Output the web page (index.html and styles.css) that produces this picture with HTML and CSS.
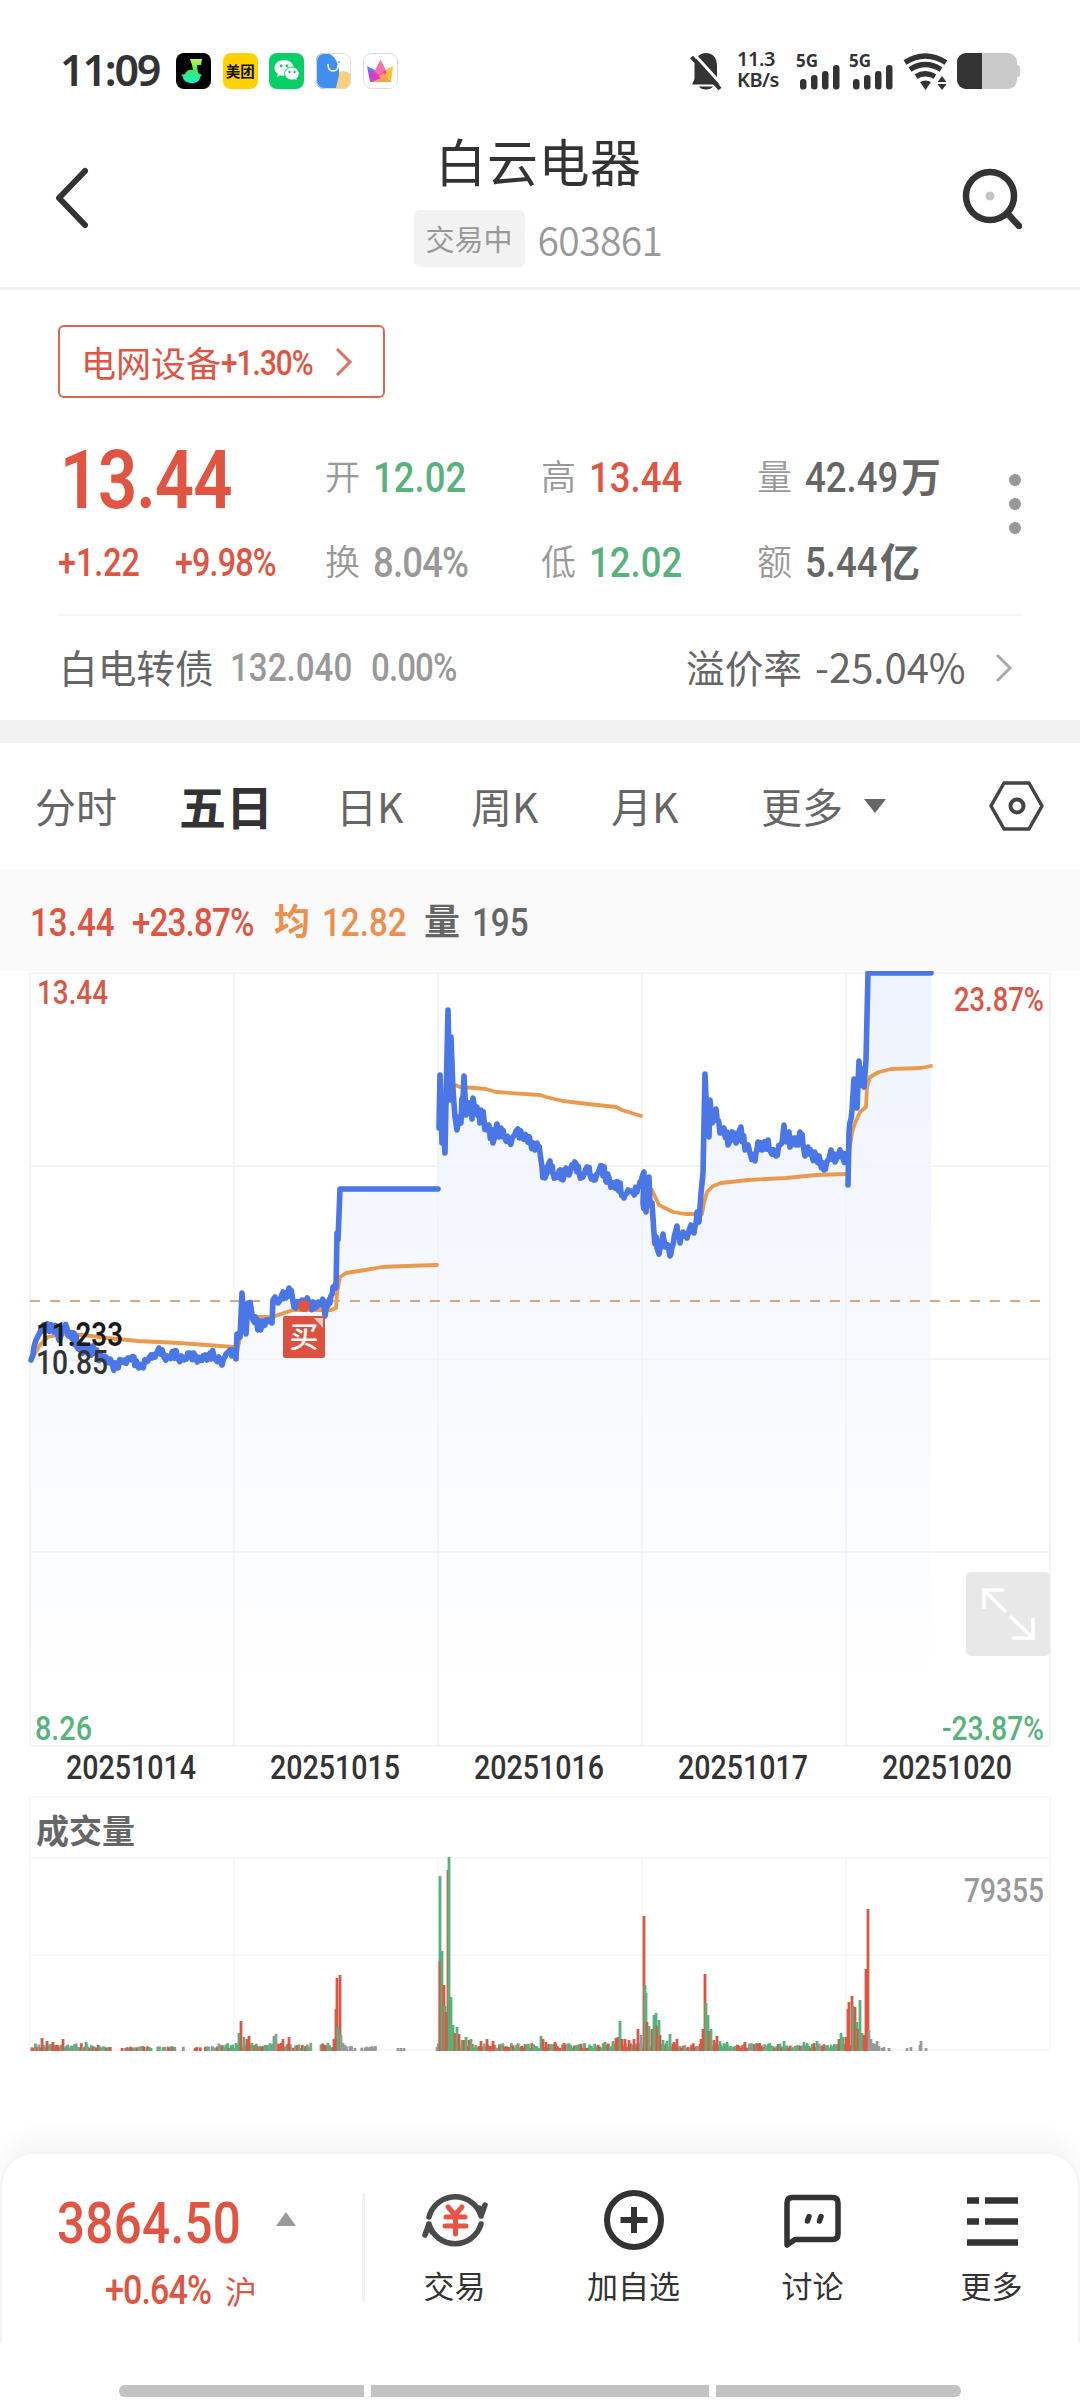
FILE: index.html
```html
<!DOCTYPE html>
<html lang="zh-CN">
<head>
    <meta charset="UTF-8">
    <meta name="viewport" content="width=device-width, initial-scale=1.0">
    <title>白云电器 603861</title>
    <link rel="stylesheet" href="styles.css">
</head>
<body>
    <div class="status">
        <span class="time">11:09</span>
        <ul class="apps">
            <li>
                <svg width="35" height="36" viewBox="0 0 35 36">
                    <defs><linearGradient id="note" x1="0" y1="0" x2="0" y2="1"><stop offset="0" stop-color="#c8f53c"/><stop offset=".5" stop-color="#3ee866"/><stop offset="1" stop-color="#12f0d0"/></linearGradient></defs>
                    <rect width="35" height="36" rx="8" fill="#000"/>
                    <path d="M14 6h12l-1 6h-4l1 8 4 2-2 2c0 4-4 6-8 6s-9-2-9-6l-2-2 4-1c1-3 4-5 8-4l-1-5z" fill="url(#note)"/>
                </svg>
            </li>
            <li><span class="meituan">美团</span></li>
            <li>
                <svg width="35" height="36" viewBox="0 0 35 36">
                    <rect width="35" height="36" rx="8" fill="#07cf68"/>
                    <path d="M15 7c-5.600 0-9.500 3.600-9.500 8 0 2.600 1.300 4.600 3.300 6l-.8 3 3.400-1.800c1.200.4 2.400.5 3.600.5 5.500 0 9.600-3.400 9.600-7.800S20.500 7 15 7z" fill="#fff"/>
                    <path d="M23 14c-4.300 0-7.400 3-7.400 6.600s3.100 6.500 7.400 6.500c1 0 2-.2 2.800-.5l2.500 1.400-.6-2.400c1.500-1.200 2.500-2.900 2.500-5 0-3.600-3-6.600-7.200-6.600z" fill="#fff" stroke="#07cf68"/>
                    <g fill="#07cf68"><circle cx="12" cy="13" r="1.400"/><circle cx="18" cy="13" r="1.400"/><circle cx="20.500" cy="19" r="1.200"/><circle cx="25.500" cy="19" r="1.200"/></g>
                </svg>
            </li>
            <li>
                <svg width="35" height="36" viewBox="0 0 35 36">
                    <clipPath id="tile"><rect width="35" height="36" rx="8"/></clipPath>
                    <g clip-path="url(#tile)">
                        <rect width="35" height="36" fill="#fff"/>
                        <circle cx="27" cy="28" r="10" fill="#f8d07d"/>
                        <path d="M0 0h10c7 1 10 6 12 12 3 9-1 16-2 24H0z" fill="#428eee"/>
                    </g>
                    <path d="M12 11c0 5 2 7 5 7s5-2 5-6" fill="none" stroke="#fff" stroke-width="1.500"/>
                    <circle cx="23" cy="9" r="1" fill="#79a7df"/>
                    <rect x=".5" y=".5" width="34" height="35" rx="8" fill="none" stroke="#ddd"/>
                </svg>
            </li>
            <li>
                <svg width="35" height="36" viewBox="0 0 35 36">
                    <rect x=".5" y=".5" width="34" height="35" rx="8" fill="#fff" stroke="#ddd"/>
                    <path d="M4 13l10 5-5 11H7z" fill="#5f83ee"/>
                    <path d="M30 13l-10 5 5 11h3z" fill="#fdc13c"/>
                    <path d="M17.500 7l6 12-6 10H8z" fill="#f745a5"/>
                    <path d="M17.500 7l5 10-6 5-5-4z" fill="#fa6fb0"/>
                    <path d="M8 29l12-9 8 9z" fill="#f6a350"/>
                    <path d="M5 16l13 9-10 4z" fill="#d53bd0"/>
                </svg>
            </li>
        </ul>
        <svg class="bell" width="34" height="38" viewBox="0 0 34 38">
            <path d="M3.500 31.500c0-3 1.500-3 2-6V13C6 5 10 0 17 0s11 5 11 13v12c.5 3 4 4 4 6.500z" fill="#333"/>
            <path d="M10 33.500h14c-2 4-12 4-14 0z" fill="#333"/>
            <path d="M5 1L34 33" stroke="#fff" stroke-width="3"/>
            <path d="M2.500 4L31 36" stroke="#333" stroke-width="4"/>
        </svg>
        <div class="speed"><b>11.3</b><b>KB/s</b></div>
        <div class="signal">
            <b>5G</b>
            <svg width="41" height="26" viewBox="0 0 41 26"><g fill="#333"><rect y="15" width="6.500" height="10.500" rx="3"/><rect x="11" y="11" width="6.500" height="14.500" rx="3"/><rect x="22" y="7" width="6.500" height="18.500" rx="3"/><rect x="33" y="1" width="6.500" height="24.500" rx="3"/></g></svg>
        </div>
        <div class="signal">
            <b>5G</b>
            <svg width="41" height="26" viewBox="0 0 41 26"><g fill="#333"><rect y="15" width="6.500" height="10.500" rx="3"/><rect x="11" y="11" width="6.500" height="14.500" rx="3"/><rect x="22" y="7" width="6.500" height="18.500" rx="3"/><rect x="33" y="1" width="6.500" height="24.500" rx="3"/></g></svg>
        </div>
        <svg class="wifi" width="46" height="38" viewBox="0 0 46 38">
            <g fill="none" stroke="#333" stroke-width="5.200">
                <path d="M2 9.500Q22 -3.500 43 9.500"/>
                <path d="M7 16.500Q22 6.500 38 16.500"/>
                <path d="M13 23.500Q22 18 32 23.500"/>
            </g>
            <path d="M17 29q5.500-3 11 0l-5.500 8z" fill="#333"/>
            <path d="M39 23l4.500 6h-9zM39 37l4.500-6h-9z" fill="#333"/>
        </svg>
        <svg class="battery" width="63" height="36" viewBox="0 0 63 36">
            <rect x="52" y="12" width="11" height="12" rx="3" fill="#cacaca"/>
            <rect width="60" height="36" rx="9" fill="#cacaca"/>
            <path d="M25 0H9a9 9 0 0 0-9 9v18a9 9 0 0 0 9 9h16z" fill="#333"/>
        </svg>
    </div>

    <div class="header">
        <svg class="back" width="34" height="62" viewBox="0 0 34 62"><path d="M30 4L4 31l26 27" fill="none" stroke="#333" stroke-width="6" stroke-linecap="round" stroke-linejoin="round"/></svg>
        <div class="name">
            <h1>白云电器</h1>
            <p><span class="state">交易中</span><span class="code">603861</span></p>
        </div>
        <svg class="search" width="60" height="62" viewBox="0 0 60 62">
            <circle cx="28" cy="29" r="24" fill="none" stroke="#333" stroke-width="6.500"/>
            <path d="M45 46l12 13" stroke="#333" stroke-width="6.500" stroke-linecap="round"/>
            <circle cx="28" cy="29" r="4.500" fill="#c4c4c4"/>
        </svg>
    </div>

    <div class="quote">
        <div class="sector">电网设备<span class="num">+1.30%</span>
            <svg width="18" height="30" viewBox="0 0 18 30"><path d="M2 2l13 13L2 28" fill="none" stroke="#e0705f" stroke-width="3"/></svg>
        </div>
        <div class="prices">
            <div class="now">
                <span class="num last">13.44</span>
                <div class="change"><span class="num">+1.22</span><span class="num tight">+9.98%</span></div>
            </div>
            <ul class="stats">
                <li><i>开</i><span class="num green">12.02</span></li>
                <li><i>高</i><span class="num red">13.44</span></li>
                <li><i>量</i><span class="num dark">42.49</span><b>万</b></li>
                <li><i>换</i><span class="num gray tight">8.04%</span></li>
                <li><i>低</i><span class="num green">12.02</span></li>
                <li><i>额</i><span class="num dark short">5.44</span><b>亿</b></li>
            </ul>
            <div class="dots"><span></span><span></span><span></span></div>
        </div>
        <div class="bond">
            <span class="bondName">白电转债</span>
            <span class="num bondPrice">132.040</span>
            <span class="num bondRate tight">0.00%</span>
            <span class="premium">溢价率<em>-25.04%</em></span>
            <svg width="18" height="30" viewBox="0 0 18 30"><path d="M2 2l13 13L2 28" fill="none" stroke="#aaa" stroke-width="3"/></svg>
        </div>
    </div>

    <ul class="tabs">
        <li>分时</li>
        <li class="on">五日</li>
        <li>日K</li>
        <li>周K</li>
        <li>月K</li>
        <li>更多</li>
        <li class="arrow"></li>
        <li class="setting">
            <svg width="58" height="52" viewBox="0 0 58 52"><path d="M16 3h25l13 23-13 23H16L3 26z" fill="none" stroke="#444" stroke-width="3.500" stroke-linejoin="round"/><circle cx="29" cy="26" r="6.500" fill="none" stroke="#444" stroke-width="4"/></svg>
        </li>
    </ul>

    <div class="info">
        <span class="num red">13.44</span>
        <span class="num red pct tight">+23.87%</span>
        <b class="orange">均</b>
        <span class="num orange avg">12.82</span>
        <b>量</b>
        <span class="num">195</span>
    </div>

    <!-- price chart, date row and volume chart share one coordinate system -->
    <svg class="chart" width="1080" height="1089" viewBox="0 971 1080 1089">
        <defs>
            <linearGradient id="fill" gradientUnits="userSpaceOnUse" x1="0" y1="973" x2="0" y2="1700">
                <stop offset="0" stop-color="#4a78e8" stop-opacity=".09"/>
                <stop offset="1" stop-color="#4a78e8" stop-opacity="0"/>
            </linearGradient>
        </defs>
        <path id="area" fill="url(#fill)"/>
        <path class="grid" d="M30 973H1050M30 1166H1050M30 1359H1050M30 1552H1050M30 1746H1050M30 973V1746M234 973V1746M438 973V1746M642 973V1746M846 973V1746M1050 973V1746"/>
        <path class="grid thin" d="M30 1797H1050V2050H30zM30 1858H1050M30 1955H1050M234 1858V2050M438 1858V2050M642 1858V2050M846 1858V2050"/>
        <g id="avg" class="avgLine"></g>
        <path class="dash" d="M30 1301H1050"/>
        <g id="price" class="priceLine"></g>
        <circle cx="304" cy="1306" r="6" fill="#e05442"/>
        <rect x="283" y="1316" width="42" height="42" rx="2" fill="#dc5140"/>
        <path d="M314 1318h9v10z" fill="#f6cdc7"/>
        <text class="buy" x="304" y="1348" text-anchor="middle">买</text>
        <g class="label">
            <text x="37" y="1004" textLength="71" lengthAdjust="spacingAndGlyphs" class="fRed">13.44</text>
            <text x="35" y="1740" textLength="57" lengthAdjust="spacingAndGlyphs" class="fGreen">8.26</text>
            <text x="954" y="1011" textLength="90" lengthAdjust="spacingAndGlyphs" class="fRed">23.87%</text>
            <text x="942" y="1740" textLength="102" lengthAdjust="spacingAndGlyphs" class="fGreen">-23.87%</text>
            <text x="36" y="1346" textLength="87" lengthAdjust="spacingAndGlyphs" class="cost">11.233</text>
            <text x="36" y="1374" textLength="72" lengthAdjust="spacingAndGlyphs">10.85</text>
            <text x="66" y="1779" textLength="130" lengthAdjust="spacingAndGlyphs">20251014</text>
            <text x="270" y="1779" textLength="130" lengthAdjust="spacingAndGlyphs">20251015</text>
            <text x="474" y="1779" textLength="130" lengthAdjust="spacingAndGlyphs">20251016</text>
            <text x="678" y="1779" textLength="130" lengthAdjust="spacingAndGlyphs">20251017</text>
            <text x="882" y="1779" textLength="130" lengthAdjust="spacingAndGlyphs">20251020</text>
            <text x="964" y="1902" textLength="80" lengthAdjust="spacingAndGlyphs" class="fGray">79355</text>
        </g>
        <text class="volTitle" x="36" y="1843">成交量</text>
        <rect x="966" y="1572" width="84" height="84" rx="5" fill="#e8e8e8"/>
        <path d="M984 1609V1590H1004M984 1590L1006 1612M1033 1618V1638H1012M1033 1638L1010 1616" fill="none" stroke="#fff" stroke-width="3.500"/>
        <g id="volume"></g>
    </svg>

    <div class="bottom">
        <div class="index">
            <p><span class="num point">3864.50</span><i class="up"></i></p>
            <p class="indexRate"><span class="num tight">+0.64%</span>沪</p>
        </div>
        <ul class="menu">
            <li>
                <svg width="68" height="68" viewBox="0 0 68 68">
                    <g fill="none" stroke="#4a4a4a" stroke-width="5.500" stroke-linecap="round" stroke-linejoin="round">
                        <path d="M8 31A27 27 0 0 1 60 30M58 22l2 8 4-11"/>
                        <path d="M60 38A27 27 0 0 1 8 38M4 49l4-11 3 8"/>
                    </g>
                    <path d="M27 21l7 8 7-8M25 31h19M24 40h21M34.500 30v18" fill="none" stroke="#e85545" stroke-width="5" stroke-linecap="round"/>
                </svg>
                交易
            </li>
            <li>
                <svg width="68" height="68" viewBox="0 0 68 68"><g fill="none" stroke="#333" stroke-width="6"><circle cx="34" cy="34" r="27"/><path d="M34 21v26M20.500 34h27"/></g></svg>
                加自选
            </li>
            <li>
                <svg width="68" height="68" viewBox="0 0 68 68"><g fill="none" stroke="#333" stroke-width="5.500" stroke-linejoin="round" stroke-linecap="round"><path d="M8 59V17q0-5.500 5.500-5.500h40q5.500 0 5.500 5.500v31q0 5.500-5.500 5.500H16z"/><path d="M30 30.500l-1.500 4.500M42 30.500l-1.500 4.500"/></g></svg>
                讨论
            </li>
            <li>
                <svg width="68" height="68" viewBox="0 0 68 68"><path d="M9 14.500h12M27 14.500h33M9 35.500h12M27 35.500h33M9 56.500h51" stroke="#333" stroke-width="6.500"/></svg>
                更多
            </li>
        </ul>
    </div>
    <div class="homeBar"><span></span><span class="mid"></span><span></span></div>

    <script src="chart.js"></script>
</body>
</html>
```

FILE: styles.css
```css
*{padding: 0; margin: 0; box-sizing: border-box;}
ul,li{list-style: none;}
i,em{font-style: normal;}
body{width: 1080px; height: 2400px; overflow: hidden; background: #fff; color: #333; font-family: "Noto Sans CJK SC", sans-serif;}
svg{display: block; flex: none;}

/* narrow figures */
.num{display: inline-block; font-family: Roboto, sans-serif; font-weight: 500; transform: scaleX(.85); transform-origin: left; white-space: nowrap;}
.tight{letter-spacing: -1px;}
.red{color: #e05442;}
.green{color: #57b27b;}
.gray{color: #999;}
.dark{color: #666;}
.orange{color: #ec8f4e;}

.status{display: flex; height: 126px; padding: 53px 0 0 60px;}
.time{width: 116px; font: 600 43px/34px "Noto Sans", sans-serif; letter-spacing: -2.200px;}
.apps{display: flex; gap: 11.700px; width: 513px;}
.apps li{width: 35px; height: 36px;}
.meituan{display: block; height: 36px; border-radius: 8px; background: #ffd100; color: #111; font-size: 14.500px; font-weight: 700; line-height: 35px; text-align: center;}
.bell{width: 34px;}
.speed{width: 59px; padding-left: 14px; font: 600 20px/21px "Noto Sans", sans-serif; margin-top: -5px;}
.speed b{display: block; font-weight: 600; letter-spacing: -.5px;}
.signal{width: 53px;}
.signal b{display: block; height: 11px; font: 700 17px/15px "Noto Sans", sans-serif; margin-left: 14px;}
.signal svg{margin-left: 18px;}
.wifi{margin: 0 8px 0 15px;}

.header{display: flex; justify-content: space-between; height: 164px; padding: 0 58px 0 55px; border-bottom: 3px solid #f2f2f2;}
.back,.search{margin-top: 41px;}
.name{margin-left: 25px; text-align: center;}
.name h1{font-size: 51px; line-height: 75px; font-weight: 400; margin: -3px 0 0 1px; letter-spacing: .6px;}
.name p{display: flex; align-items: center; gap: 13px; margin-top: 12px;}
.state{height: 57px; width: 111px; border-radius: 6px; background: #f2f2f2; color: #999; font-size: 29px; line-height: 56px;}
.code{font-size: 39px; line-height: 54px; color: #999; letter-spacing: -.6px; font-weight: 350;}

.quote{height: 430px; padding: 35px 58px 0;}
.sector{display: flex; align-items: center; width: 327px; height: 73px; border: 2px solid #dc6656; border-radius: 6px; padding-left: 21px; color: #e05442; font-size: 35px;}
.sector .num{width: 114px; font-size: 35px; letter-spacing: -1.100px; padding-top: 3px;}
.prices{display: flex; height: 216px;}
.now{width: 267px; padding-top: 35px;}
.last{display: block; color: #e05442; font-size: 81px; line-height: 96px; font-weight: 600; padding-left: 2px; letter-spacing: -1.200px;}
.change{display: flex; color: #e05442; font-size: 38px; line-height: 50px; margin-top: 9px;}
.change .num{width: 117px; flex: none;}
.stats{display: grid; grid-template-columns: 216px 216px 216px; grid-auto-rows: 85px; padding-top: 36px;}
.stats li{display: flex; align-items: center; height: 84px;}
.stats i{width: 48px; font-size: 35px; line-height: 50px; color: #999; font-weight: 350; margin-top: -3px;}
.stats .num{font-size: 43px; width: 96px; padding-top: 1px;}
.stats .short{width: 75px;}
.stats b{font-size: 40px; line-height: 60px; color: #666; margin-top: -2px;}
.dots{padding-top: 76px; margin-left: 36px;}
.dots span{display: block; width: 12px; height: 12px; border-radius: 50%; background: #999; margin-bottom: 12px;}
.bond{display: flex; align-items: center; height: 106px; border-top: 2px solid #f7f7f7; color: #666;}
.bondName{width: 172px; padding-left: 1px; font-size: 38.700px; margin-top: -5px;}
.bondPrice{width: 141px; font-size: 39px; color: #999;}
.bondRate{width: 255px; font-size: 39px; color: #999; letter-spacing: -1.100px;}
.premium{width: 309px; margin: -5px 0 0 60px; font-size: 38.700px;}
.premium em{font-size: 40px; margin-left: 13px;}

.tabs{display: flex; align-items: center; height: 149px; border-top: 23px solid #f2f2f2; padding-left: 35px; color: #666; font-size: 41px;}
.tabs li{flex: none; width: 135px; margin-top: -2px;}
.tabs li:nth-child(1){width: 144px;}
.tabs .on{width: 157px; font-size: 47px; font-weight: 700; color: #333; margin-top: -4px;}
.tabs li:nth-child(4){width: 140px;}
.tabs li:nth-child(5){width: 150px;}
.tabs li:nth-child(6){width: 103px;}
.tabs .arrow{width: 0; height: 0; margin-top: 0; border: 11px solid transparent; border-top: 14px solid #666; border-bottom: 0;}
.tabs .setting{margin: 0 0 0 102px;}

.info{display: flex; align-items: center; height: 102px; padding-left: 30px; background: #fafafa; color: #666; font-size: 36px;}
.info .num{width: 102px; font-size: 39px; padding-top: 5px;}
.info .pct{width: 142px;}
.info b{width: 48px; margin-top: -2px;}
.info .avg{width: 102px;}

.chart text{font-family: Roboto, sans-serif;}
.chart .label text{font-size: 34px; font-weight: 500; fill: #333;}
.chart .label .fRed{fill: #d95746;}
.chart .label .fGreen{fill: #57b27b;}
.chart .label .fGray{fill: #999;}
.chart .label .cost{fill: #1a1a1a; font-weight: 600;}
.chart .volTitle{font: 700 33px "Noto Sans CJK SC", sans-serif; fill: #666;}
.chart .buy{font: 500 29px "Noto Sans CJK SC", sans-serif; fill: #fff;}
.grid{fill: none; stroke: #f3f4f5; stroke-width: 2;}
.thin{stroke: #f7f7f7;}
.dash{stroke: #d6a882; stroke-width: 2; stroke-dasharray: 10 10;}
.avgLine{fill: none; stroke: #ea9a4c; stroke-width: 3.800; stroke-linecap: round; stroke-linejoin: round;}
.priceLine{fill: none; stroke: #4a76e6; stroke-width: 5.600; stroke-linecap: round; stroke-linejoin: round;}

.bottom{display: flex; height: 191px; margin-top: 92px; border: 2px solid #f4f4f4; border-bottom: 0; border-radius: 34px 34px 0 0; background: #fff; box-shadow: 0 -14px 24px rgba(0,0,0,.04);}
.index{flex: none; width: 363px; height: 109px; margin-top: 39px; border-right: 3px solid #f2f2f2; color: #e05442;}
.index p{display: flex; align-items: center; height: 60px; padding-left: 55px;}
.index .point{width: 219px; font-size: 58px; letter-spacing: .4px;}
.up{border: 10.500px solid transparent; border-bottom: 14px solid #999; border-top: 0; margin-top: -9px;}
.index .indexRate{height: 74px; padding-left: 103px; font-size: 32px;}
.indexRate .num{width: 120px; font-size: 40px;}
.menu{display: flex; flex: none; padding-top: 32px;}
.menu li{display: flex; flex-direction: column; align-items: center; width: 179px; font-size: 31px; line-height: 61px;}
.homeBar{display: flex; gap: 7px; height: 56px; padding: 42px 0 0 119px; background: #fff; position: relative;}
.homeBar span{width: 245px; height: 12px; background: #c2c2c2; border-radius: 6px 0 0 6px;}
.homeBar .mid{width: 338px; border-radius: 0;}
.homeBar span:last-child{border-radius: 0 6px 6px 0;}
```

FILE: chart.js
```js
var NS = "http://www.w3.org/2000/svg";

// one string of "x,y" points for each trading day
var price = [
    "31,1360 33,1355 36,1340 41,1330 45,1325 48,1330 52,1325 57,1332 59,1340 63,1328 67,1328 71,1337 74,1333 77,1347 81,1350 86,1347 90,1353 94,1348 98,1355 102,1358 107,1358 112,1363 117,1368 121,1360 125,1363 129,1358 134,1357 137,1365 142,1367 146,1362 151,1355 155,1357 159,1348 164,1357 169,1357 174,1351 177,1357 184,1360 190,1353 196,1357 200,1360 205,1355 207,1360 210,1353 214,1357 222,1365 226,1354 230,1350 235,1352",
    "236,1359 237,1334 240,1337 242,1293 244,1320 246,1334 248,1303 251,1308 253,1320 257,1323 260,1328 263,1323 268,1320 272,1323 273,1300 275,1297 278,1303 283,1292 286,1298 289,1288 292,1295 294,1307 299,1305 303,1300 310,1305 315,1308 320,1305 324,1303 325,1316 327,1303 330,1303 333,1287 336,1288 337,1233 338,1240 340,1189 438,1189",
    "439,1128 440,1075 442,1143 443,1120 445,1153 446,1100 448,1010 450,1100 451,1037 453,1090 455,1117 457,1130 459,1117 461,1123 464,1076 466,1115 469,1103 472,1119 473,1098 475,1110 477,1107 480,1123 481,1110 484,1120 487,1130 489,1125 493,1143 497,1124 499,1137 501,1128 504,1137 510,1143 513,1137 518,1129 522,1138 527,1137 530,1140 535,1150 537,1143 540,1153 542,1167 545,1178 550,1161 553,1173 557,1177 560,1170 563,1180 566,1168 569,1175 572,1165 576,1164 579,1172 583,1177 587,1167 590,1175 594,1180 598,1173 602,1166 605,1177 609,1178 614,1187 618,1182 621,1193 624,1198 628,1190 633,1192 637,1192 640,1182",
    "641,1182 644,1172 643,1203 646,1212 649,1177 650,1205 652,1203 654,1233 657,1248 659,1254 663,1234 665,1247 668,1245 670,1256 673,1245 677,1226 680,1243 683,1232 687,1238 691,1225 694,1233 697,1212 699,1222 701,1193 703,1173 705,1074 707,1120 709,1137 710,1100 712,1123 716,1109 720,1133 724,1128 728,1145 732,1132 736,1143 741,1127 745,1150 748,1145 750,1153 755,1161 758,1142 762,1150 766,1142 769,1148 776,1156 780,1145 782,1143 784,1125 787,1142 789,1132 790,1147 795,1138 798,1145 800,1132 803,1145 805,1156 808,1147 811,1153 817,1159 820,1160 824,1170 828,1160 831,1150 835,1162 840,1150 843,1158 847,1158",
    "848,1185 849,1133 852,1110 854,1079 857,1108 859,1061 862,1085 864,1087 866,1060 868,973 931,973"
];
var avg = [
    "32,1358 40,1345 48,1337 62,1334 83,1335 107,1338 138,1341 179,1343 207,1345 234,1347",
    "236,1357 243,1323 250,1317 258,1317 272,1317 293,1310 331,1310 336,1308 337,1293 340,1277 346,1273 365,1270 382,1267 406,1266 437,1265",
    "440,1100 444,1115 450,1090 455,1085 460,1087 475,1088 486,1089 496,1092 540,1095 546,1097 563,1101 588,1104 616,1107 622,1110 641,1116",
    "646,1186 652,1190 659,1205 673,1212 685,1214 702,1214 704,1203 707,1192 713,1186 721,1183 748,1180 786,1178 816,1175 845,1174",
    "848,1160 852,1133 855,1123 860,1112 866,1107 867,1087 870,1077 879,1072 891,1069 921,1068 931,1066"
];

var seed = 7;
function rnd(){
    seed = (seed * 16807) % 2147483647;
    return seed / 2147483647;
}

// add the small minute to minute ticks between the turning points
function addTicks(day){
    var pts = day.split(" ");
    var out = [pts[0]];
    for(var i=1;i<pts.length;i++){
        var a = pts[i-1].split(",");
        var b = pts[i].split(",");
        var dx = b[0] - a[0];
        if(dx>=3 && dx<10){
            var mx = (+a[0] + +b[0]) / 2;
            var my = (+a[1] + +b[1]) / 2;
            out.push((mx-0.7) + "," + (my + rnd()*5));
            out.push((mx+0.7) + "," + (my - rnd()*5));
        }
        out.push(pts[i]);
    }
    return out.join(" ");
}
price = price.map(addTicks);

function addLines(id, list){
    var g = document.getElementById(id);
    for(var i=0;i<list.length;i++){
        var line = document.createElementNS(NS, "polyline");
        line.setAttribute("points", list[i]);
        g.appendChild(line);
    }
}
addLines("price", price);
addLines("avg", avg);
document.getElementById("area").setAttribute("d", "M31,1745 L" + price.join(" ") + " L931,1745Z");

// volume: [x, height, colour]
var colors = {r: "#dc5646", g: "#57b27b", n: "#999"};
var bars = [
    [42,13,"r"],[47,10,"r"],[53,9,"r"],[63,12,"r"],[86,9,"g"],
    [239,18,"g"],[241,30,"r"],[244,14,"g"],[247,12,"r"],[249,15,"r"],[252,8,"g"],
    [274,15,"g"],[276,17,"n"],[281,8,"r"],[283,12,"r"],[289,14,"r"],[325,6,"r"],
    [334,12,"r"],[336,42,"r"],[337,73,"r"],[340,76,"r"],[338,25,"g"],[341,16,"n"],[343,8,"n"],
    [437,4,"n"],[440,175,"g"],[440,90,"r"],[442,100,"g"],[444,66,"r"],[445,45,"g"],[446,39,"r"],
    [448,181,"r"],[449,194,"g"],[451,54,"g"],[453,26,"g"],[455,18,"r"],[457,24,"g"],[459,17,"r"],
    [462,11,"g"],[464,11,"r"],[466,14,"g"],[469,11,"r"],[471,12,"g"],[481,10,"r"],[487,12,"r"],[493,10,"r"],
    [541,15,"g"],[543,12,"r"],[546,9,"r"],[555,9,"r"],[564,8,"r"],[605,9,"g"],[613,10,"g"],[616,13,"r"],
    [618,14,"r"],[620,30,"g"],[622,12,"r"],[625,12,"r"],[629,11,"r"],[634,12,"r"],[638,22,"r"],[641,16,"n"],
    [644,135,"r"],[645,66,"g"],[646,58,"g"],[647,29,"r"],[649,25,"g"],[652,22,"r"],[654,36,"g"],[656,38,"g"],
    [657,25,"r"],[659,31,"g"],[660,16,"r"],[663,11,"g"],[667,10,"g"],[670,17,"g"],[674,9,"r"],[677,12,"r"],
    [701,12,"r"],[703,22,"r"],[705,77,"r"],[706,48,"g"],[708,36,"g"],[709,20,"r"],[711,22,"g"],[714,11,"r"],
    [717,15,"r"],[720,10,"g"],[727,9,"g"],[745,9,"r"],[784,10,"g"],[804,9,"g"],[817,10,"g"],
    [839,12,"r"],[841,18,"g"],[843,14,"g"],[846,14,"r"],[848,42,"r"],[849,49,"r"],[852,55,"r"],[853,45,"g"],
    [855,44,"r"],[857,29,"g"],[858,22,"r"],[860,51,"g"],[862,18,"g"],[864,16,"r"],[866,82,"r"],[868,142,"r"],
    [869,21,"n"],[871,12,"n"],[873,8,"n"],[875,7,"n"],[877,10,"n"],[879,5,"n"],[882,3,"n"],[884,4,"n"],[889,3,"n"],
    [907,3,"n"],[911,4,"n"],[920,6,"n"],[921,10,"n"],[926,3,"n"],[398,3,"n"],[401,3,"n"],[404,3,"n"]
];
var volume = document.getElementById("volume");
function addBar(x, h, c){
    var bar = document.createElementNS(NS, "rect");
    bar.setAttribute("x", x - 1.4);
    bar.setAttribute("y", 2051 - h);
    bar.setAttribute("width", 2.8);
    bar.setAttribute("height", h);
    bar.setAttribute("fill", colors[c]);
    volume.appendChild(bar);
}
// quiet minutes between the peaks
for(var x=32;x<866;x+=1.7){
    if((x>378 && x<438) || (x>312 && x<320)) continue;
    var quiet = (x>100 && x<215) || (x>345 && x<379);
    if(quiet && rnd()<0.4) continue;
    var k = rnd();
    var h = 3 + rnd()*(quiet ? 2 : 5);
    addBar(x, h, x>341 && x<379 ? "n" : (k<0.42 ? "r" : (k<0.85 ? "g" : "n")));
}
for(var i=0;i<bars.length;i++){
    addBar(bars[i][0], bars[i][1], bars[i][2]);
}
```
